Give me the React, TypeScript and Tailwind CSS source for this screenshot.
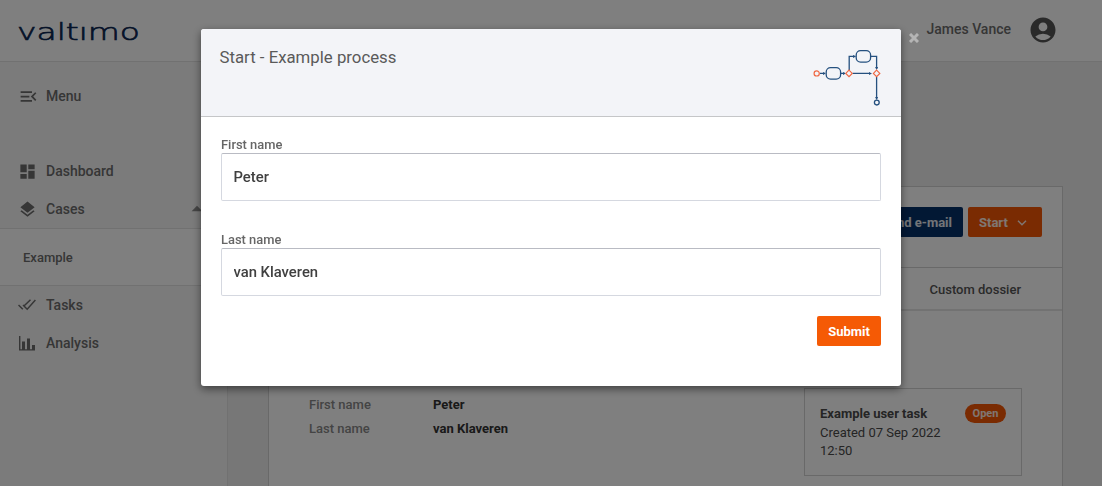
import React from "react";
import {
  MdAccountCircle,
  MdArrowDropUp,
  MdDashboard,
  MdLayers,
  MdMenuOpen,
} from "react-icons/md";

function Logo() {
  return (
    <svg width="126" height="26" viewBox="0 0 126 26" className="block overflow-visible text-[#0a2550]">
      <text
        x="-1"
        y="21.8"
        textLength="123"
        lengthAdjust="spacingAndGlyphs"
        fill="currentColor"
        stroke="currentColor"
        strokeWidth="0.6"
        fontFamily="'DejaVu Sans', 'DejaVu Sans Light', sans-serif"
        fontSize="23"
        fontWeight="200"
      >
        valtımo
      </text>
    </svg>
  );
}

function TasksIcon() {
  return (
    <svg width="18" height="12" viewBox="0 0 18 12" fill="none" stroke="currentColor" strokeWidth="1.5">
      <path d="M.5 6 4.8 10.3M5 6l4.2 4.2L17.4 1M6.2 6.8 12.5.8" />
    </svg>
  );
}

function AnalysisIcon() {
  return (
    <svg width="17" height="15" viewBox="0 0 17 15" fill="currentColor">
      <path d="M0 0h1.4v13.2H3V5.6h3v7.6h2V2.6h3v10.6h2V9h3v5.6H0z" />
    </svg>
  );
}

function ProcessArt() {
  return (
    <svg width="70" height="58" viewBox="0 0 70 58" fill="none" className="block">
      <g stroke="#25507f" strokeWidth="1.3">
        <rect x="13.2" y="19.7" width="14.4" height="11.4" rx="4.4" />
        <rect x="43.2" y="2.7" width="14.4" height="11.4" rx="4.4" />
        <path d="M7 25.4h5M28 25.4h4M39.5 25.4h17M36.2 22V8.4h6M58 8.4h5.6V21M63.6 29v22" />
        <circle cx="63.8" cy="54.6" r="2.4" />
      </g>
      <path
        fill="#25507f"
        d="m10 23.9 2.8 1.5-2.8 1.5zM30 23.9l2.8 1.5-2.8 1.5zM56 23.9l3 1.5-3 1.5zM40 6.9l3 1.5-3 1.5zM62.1 19l1.5 3 1.5-3zM62.1 49l1.5 3 1.5-3z"
      />
      <g stroke="#ef6844" strokeWidth="1.2">
        <circle cx="3.7" cy="25.4" r="2.6" />
        <path d="m36 22.2 3.2 3.2-3.2 3.2-3.2-3.2zM63.6 22.2l3.2 3.2-3.2 3.2-3.2-3.2z" />
      </g>
    </svg>
  );
}

function NavItem({ icon, label, children }: { icon: React.ReactNode; label: string; children?: React.ReactNode }) {
  return (
    <div className="flex h-[38px] items-center pl-[18px]">
      <span className="flex w-[28px] shrink-0 items-center">{icon}</span>
      <span className="flex-1">{label}</span>
      {children}
    </div>
  );
}

function Sidebar() {
  return (
    <nav className="w-[228px] shrink-0 border-r border-[#e2e2e2] bg-[#f7f7f7] pt-[15px] text-[14px] font-medium text-[#6c6c6c]">
      <NavItem icon={<MdMenuOpen size={21} />} label="Menu" />
      <div className="mt-[37px]">
        <NavItem icon={<MdDashboard size={19} />} label="Dashboard" />
        <NavItem icon={<MdLayers size={19} />} label="Cases">
          <span className="mr-[17px] text-[#8c8c8c]">
            <MdArrowDropUp size={26} />
          </span>
        </NavItem>
        <div className="flex h-[58px] items-center border-y border-[#e2e2e2] bg-white pl-[23px] pt-[2px] text-[13px]">
          Example
        </div>
        <NavItem icon={<TasksIcon />} label="Tasks" />
        <NavItem icon={<span className="pl-px"><AnalysisIcon /></span>} label="Analysis" />
      </div>
    </nav>
  );
}

function CaseCard() {
  return (
    <section className="ml-10 mt-[124px] h-[320px] w-[795px] border border-[#d2d2d2] bg-white">
      <div className="flex h-[81px] items-start justify-end gap-[5px] border-b border-[#d2d2d2] pr-[20px] pt-5 text-[13px] font-bold text-white/90">
        <button className="h-[30px] rounded-[2px] bg-[#053069] px-[11px] pt-[2px]">Send e-mail</button>
        <button className="flex h-[30px] w-[74px] items-center gap-[9px] rounded-[2px] bg-[#f55605] pl-[11px] pt-px">
          Start
          <svg width="10" height="6" viewBox="0 0 10 6" fill="none" stroke="currentColor" strokeWidth="1.4">
            <path d="m1 .7 4 4 4-4" />
          </svg>
        </button>
      </div>
      <div className="flex h-[43px] items-center justify-end border-b-2 border-[#e4e4e4] pr-[41px] pt-[2px] text-[13px] font-medium text-[#555]">
        Custom dossier
      </div>
      <div className="flex items-start justify-between pl-[40px] pr-[40px] pt-[77px] text-[13px]">
        <dl className="grid grid-cols-[124px_auto] pt-[5px] leading-6">
          <dt className="text-[#888] font-medium">First name</dt>
          <dd className="font-bold text-[#333]">Peter</dd>
          <dt className="text-[#888] font-medium">Last name</dt>
          <dd className="font-bold text-[#333]">van Klaveren</dd>
        </dl>
        <div className="flex h-[88px] w-[218px] items-start justify-between border border-[#d2d2d2] pl-[15px] pr-[15px] pt-[15px] leading-[18.5px] text-[#4a4a4a]">
          <div className="w-[130px] pt-px">
            <div className="font-bold">Example user task</div>
            <div>Created 07 Sep 2022 12:50</div>
          </div>
          <span className="flex h-[19px] w-[41px] items-center justify-center rounded-full bg-[#f55605] pt-[2px] text-[11px] font-bold text-white/90">
            Open
          </span>
        </div>
      </div>
    </section>
  );
}

function Field({ label, value }: { label: string; value: string }) {
  return (
    <label className="block text-[13px] leading-[17px] font-medium text-[#666]">
      <span className="block text-[12.9px]">{label}</span>
      <input
        defaultValue={value}
        className="block h-12 w-full rounded-[2px] border border-[#d5d8e0] border-t-[#b9bbc3] px-[11.5px] text-[14.8px] font-medium text-[#404040] outline-none"
      />
    </label>
  );
}

function StartModal() {
  return (
    <div className="fixed inset-0 flex items-start justify-center bg-black/50 pt-[29px]">
      <div className="relative h-[357px] w-[700px] rounded-[3px] bg-white shadow-[0_3px_9px_rgba(0,0,0,0.5)]">
        <div className="flex h-[88px] justify-between rounded-t-[3px] border-b border-[#c5c6c8] bg-[#f3f4f8] pl-[18.5px] pr-[18px] pt-[19px]">
          <h1 className="text-[16.8px] leading-[19px] text-[#5a5a5a]">Start - Example process</h1>
          <ProcessArt />
        </div>
        <div className="flex flex-col gap-[30px] px-5 pt-[19px]">
          <Field label="First name" value="Peter" />
          <Field label="Last name" value="van Klaveren" />
          <div className="-mt-[10px] flex justify-end">
            <button className="h-[30px] w-16 rounded-[2px] bg-[#f55a05] pt-[2px] text-[13px] font-bold text-white">
              Submit
            </button>
          </div>
        </div>
        <button className="absolute -right-[18px] top-[4px] text-[#b5b5b5]" aria-label="Close">
          <svg width="10" height="10" viewBox="0 0 10 10" className="block" stroke="currentColor" strokeWidth="3">
            <path d="m1 1 8 8M9 1 1 9" />
          </svg>
        </button>
      </div>
    </div>
  );
}

export default function App() {
  return (
    <div className="flex h-[486px] flex-col overflow-hidden bg-[#eeeeee] font-['Roboto',sans-serif]">
      <header className="flex h-[62px] shrink-0 items-center justify-between border-b border-[#e2e2e2] bg-white pl-[18px] pr-[44px]">
        <Logo />
        <div className="flex items-center gap-[17px] pb-[2px] text-[14px] font-medium text-[#6c6c6c]">
          James Vance
          <MdAccountCircle size={30} className="text-[#555]" />
        </div>
      </header>
      <div className="flex min-h-0 flex-1">
        <Sidebar />
        <main className="min-w-0 flex-1">
          <CaseCard />
        </main>
      </div>
      <StartModal />
    </div>
  );
}
